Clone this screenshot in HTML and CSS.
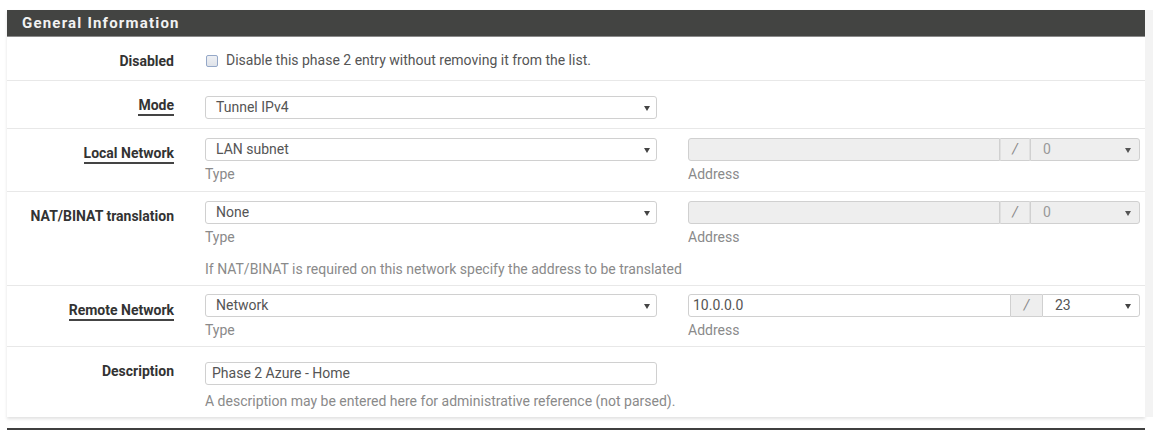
FILE: index.html
```html
<!DOCTYPE html>
<html>
<head>
<meta charset="utf-8">
<link rel="stylesheet" href="styles.css">
</head>
<body>
<div class="panel">
  <div class="panel-heading">General Information</div>
  <div class="panel-body">
    <div class="row">
      <div class="label">Disabled</div>
      <div class="controls p15 pb11">
        <label class="check"><span class="box"></span>Disable this phase 2 entry without removing it from the list.</label>
      </div>
    </div>
    <div class="row">
      <div class="label"><span class="ul">Mode</span></div>
      <div class="controls p15 pb9">
        <div class="select w452">Tunnel IPv4</div>
      </div>
    </div>
    <div class="row">
      <div class="label"><span class="ul">Local Network</span></div>
      <div class="controls p9 pb8">
        <div class="pair">
          <div class="col">
            <div class="select">LAN subnet</div>
            <div class="help">Type</div>
          </div>
          <div class="col">
            <div class="group disabled">
              <div class="inp g312"></div>
              <div class="addon a30">/</div>
              <div class="select sel-addr">0</div>
            </div>
            <div class="help">Address</div>
          </div>
        </div>
      </div>
    </div>
    <div class="row">
      <div class="label">NAT/BINAT translation</div>
      <div class="controls p9 pb7">
        <div class="pair">
          <div class="col">
            <div class="select">None</div>
            <div class="help">Type</div>
          </div>
          <div class="col">
            <div class="group disabled">
              <div class="inp g312"></div>
              <div class="addon a30">/</div>
              <div class="select sel-addr">0</div>
            </div>
            <div class="help">Address</div>
          </div>
        </div>
        <div class="help help-gap">If NAT/BINAT is required on this network specify the address to be translated</div>
      </div>
    </div>
    <div class="row">
      <div class="label"><span class="ul">Remote Network</span></div>
      <div class="controls p8 pb7">
        <div class="pair">
          <div class="col">
            <div class="select">Network</div>
            <div class="help">Type</div>
          </div>
          <div class="col">
            <div class="group">
              <div class="inp g323">10.0.0.0</div>
              <div class="addon a31">/</div>
              <div class="select sel-addr">23</div>
            </div>
            <div class="help">Address</div>
          </div>
        </div>
      </div>
    </div>
    <div class="row last">
      <div class="label">Description</div>
      <div class="controls p15 pb7">
        <div class="text-input w452">Phase 2 Azure - Home</div>
        <div class="help help-desc">A description may be entered here for administrative reference (not parsed).</div>
      </div>
    </div>
  </div>
</div>
<div class="next-panel"></div>
</body>
</html>
```

FILE: styles.css
```css
* { box-sizing: border-box; }
html, body { margin: 0; background: #fff; }
body {
  padding: 10px 0 0 7px;
  font-family: Roboto, "Liberation Sans", Arial, sans-serif;
  font-size: 14px;
  color: #333;
}
.panel {
  width: 1138px;
  background: #fff;
  box-shadow: 8px 0 0 #f3f3f3, 0 2px 3px rgba(0,0,0,0.12);
}
.panel-heading {
  height: 27px;
  line-height: 26px;
  background: #434442;
  color: #f2f2f2;
  font-weight: bold;
  font-size: 15px;
  letter-spacing: 1.2px;
  padding-left: 15px;
  border-bottom: 1px solid #8a8a8a;
}
.row {
  display: flex;
  border-bottom: 1px solid #e8e8e8;
}
.row.last { border-bottom: none; }
.label {
  width: 183px;
  flex: none;
  text-align: right;
  padding: 16px 16px 0 0;
  font-weight: bold;
  line-height: 17px;
  color: #333;
}
.ul {
  border-bottom: 2px solid #444;
  padding-bottom: 1px;
}
.controls {
  padding-left: 15px;
  flex: 1;
}
.p15 { padding-top: 15px; }
.p9 { padding-top: 9px; }
.p8 { padding-top: 8px; }
.pb11 { padding-bottom: 11px; }
.pb9 { padding-bottom: 9px; }
.pb8 { padding-bottom: 8px; }
.pb7 { padding-bottom: 7px; }
.check {
  display: flex;
  align-items: center;
  line-height: 17px;
  color: #555;
}
.box {
  width: 12px;
  height: 12px;
  border: 1px solid #95a8c8;
  border-radius: 2px;
  background: linear-gradient(#eef0f4, #dfe3e9);
  margin: 0 8px 0 1px;
}
.select, .inp, .text-input {
  height: 23px;
  line-height: 21px;
  border: 1px solid #d0d0d0;
  border-radius: 3px;
  color: #555;
  background: #fff;
}
.select {
  position: relative;
  padding: 0 10px;
}
.select::after {
  content: "";
  position: absolute;
  right: 6px;
  top: 9px;
  border-left: 3px solid transparent;
  border-right: 3px solid transparent;
  border-top: 5px solid #444;
}
.w452 { width: 452px; }
.text-input { padding: 0 6px; }
.pair {
  display: flex;
  gap: 31px;
}
.col { width: 452px; }
.help {
  color: #8a8a8a;
  line-height: 17px;
  margin-top: 5px;
}
.help-gap { margin-top: 15px; }
.help-desc { margin-top: 8px; }
.group {
  display: flex;
  width: 452px;
}
.group .inp {
  border-radius: 3px 0 0 3px;
  padding: 0 4px;
}
.g312 { width: 312px; }
.g323 { width: 323px; }
.addon {
  height: 23px;
  line-height: 21px;
  border: 1px solid #d0d0d0;
  border-left: none;
  border-right: none;
  background: #eee;
  color: #888;
  text-align: center;
  font-style: italic;
}
.a30 { width: 30px; }
.a31 { width: 31px; }
.group .sel-addr {
  flex: 1;
  border-radius: 0 3px 3px 0;
  padding: 0 8px 0 12px;
}
.group .sel-addr::after { right: 8px; }
.disabled .inp, .disabled .sel-addr { background: #eee; color: #999; }
.disabled .addon { background: #eee; border-left: 1px solid #e0e0e0; border-right: 1px solid #e0e0e0; }
.disabled .sel-addr::after { border-top-color: #555; }
.next-panel {
  width: 1138px;
  height: 2px;
  margin-top: 11px;
  background: #3f3f3f;
}
```
